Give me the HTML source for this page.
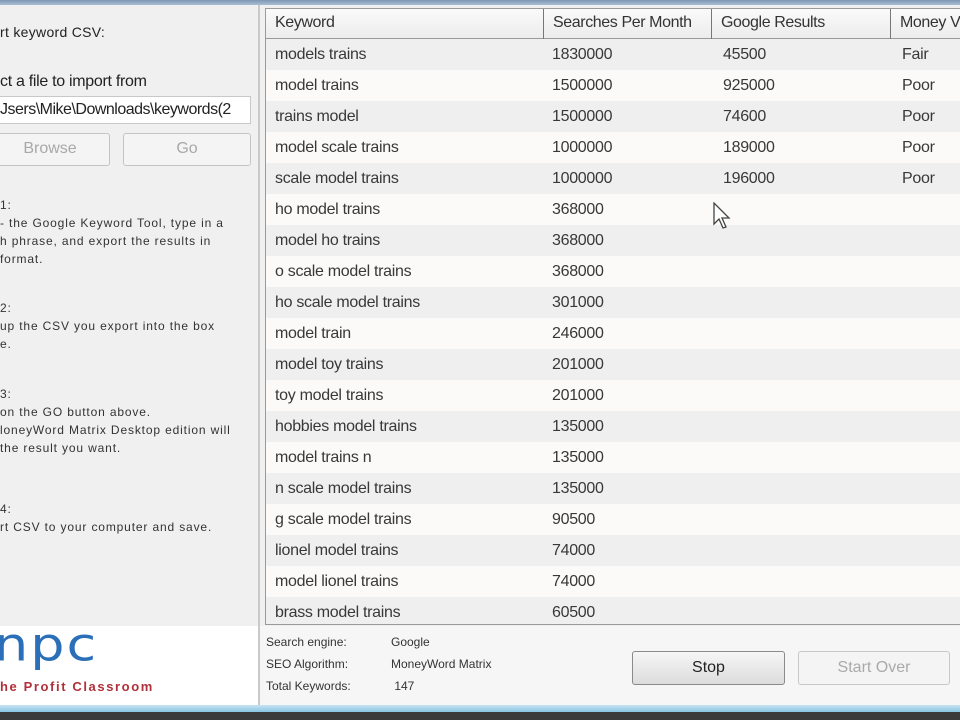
<!DOCTYPE html>
<html><head><meta charset="utf-8"><style>
*{margin:0;padding:0;box-sizing:border-box}
body{width:960px;height:720px;overflow:hidden;background:#f0f0f0;font-family:"Liberation Sans",sans-serif;color:#222;position:relative}
.abs{position:absolute;white-space:nowrap}
.top{left:0;top:0;width:960px;height:5px;background:linear-gradient(#7d97b5,#a9bdd2)}
.left{left:0;top:5px;width:258px;height:621px;background:#f0f0f0}
.logo{left:0;top:626px;width:260px;height:80px;background:#fff}
.vdiv{left:258px;top:5px;width:2px;height:700px;background:#c9c9c9}
.f14{font-size:15px;letter-spacing:-0.3px}
.s{font-size:12px;line-height:18px;letter-spacing:0.85px;color:#333}
.btn{border:1px solid #c4c4c4;border-radius:3px;background:#f4f4f4;color:#a8a8a8;font-size:15px;text-align:center;line-height:30px}
.table{left:265px;top:8px;width:700px;height:617px;border:1px solid #9a9a9a;background:#fff;overflow:hidden}
.hdr{position:absolute;left:0;top:0;height:30px;width:700px;background:linear-gradient(#fafafa,#ececec);border-bottom:1px solid #9a9a9a}
.hdr div{position:absolute;top:0;height:30px;line-height:28px;padding-left:9px;font-size:16px;letter-spacing:-0.4px;border-right:1px solid #777;color:#333}
.row{position:absolute;left:0;width:700px;height:31px;font-size:16px;letter-spacing:-0.3px;color:#383838}
.row span{position:absolute;top:0;line-height:31px}
.even{background:#efefef}.odd{background:#fbfaf8}
.bottom{left:260px;top:626px;width:700px;height:80px;background:#f6f6f6}
.task{left:0;top:705px;width:960px;height:8px;background:linear-gradient(#c8e4f2,#7fc0e0)}
.task2{left:0;top:712px;width:960px;height:8px;background:#3a3a3a}
</style></head><body>
<div class="abs top"></div>
<div class="abs left"></div>
<div class="abs logo"></div>
<div class="abs vdiv"></div>
<div class="abs" style="left:0;top:24px;font-size:14px;letter-spacing:0.3px">rt keyword CSV:</div>
<div class="abs f14" style="left:0;top:73px;font-size:16px">ct a file to import from</div>
<div class="abs" style="left:-2px;top:96px;width:253px;height:28px;background:#fff;border:1px solid #c8c8c8"></div>
<div class="abs f14" style="left:0;top:101px;font-size:16px;letter-spacing:-0.5px">Jsers\Mike\Downloads\keywords(2</div>
<div class="abs btn" style="left:-10px;top:133px;width:120px;height:33px;font-size:16px">Browse</div>
<div class="abs btn" style="left:123px;top:133px;width:128px;height:33px;font-size:16px">Go</div>
<div class="abs s" style="left:0;top:196px">1:<br>- the Google Keyword Tool, type in a<br>h phrase, and export the results in<br>format.</div>
<div class="abs s" style="left:0;top:299px">2:<br>up the CSV you export into the box<br>e.</div>
<div class="abs s" style="left:0;top:385px">3:<br>on the GO button above.<br>loneyWord Matrix Desktop edition will<br>the result you want.</div>
<div class="abs s" style="left:0;top:500px">4:<br>rt CSV to your computer and save.</div>
<div class="abs" style="left:-6px;top:618px;font-size:54px;color:#2a6fb8;letter-spacing:2px;font-family:'DejaVu Sans',sans-serif;transform:scaleY(0.85);transform-origin:top left">npc</div>
<div class="abs" style="left:0;top:679px;font-size:13px;color:#b0303a;letter-spacing:1.6px;font-weight:bold">he Profit Classroom</div>

<div class="abs table">
<div class="hdr">
<div style="left:0;width:278px">Keyword</div>
<div style="left:278px;width:168px">Searches Per Month</div>
<div style="left:446px;width:179px">Google Results</div>
<div style="left:625px;width:100px;border:none">Money V</div>
</div>
<div class="row even" style="top:30px"><span style="left:9px">models trains</span><span style="left:286px">1830000</span><span style="left:457px">45500</span><span style="left:636px">Fair</span></div>
<div class="row odd" style="top:61px"><span style="left:9px">model trains</span><span style="left:286px">1500000</span><span style="left:457px">925000</span><span style="left:636px">Poor</span></div>
<div class="row even" style="top:92px"><span style="left:9px">trains model</span><span style="left:286px">1500000</span><span style="left:457px">74600</span><span style="left:636px">Poor</span></div>
<div class="row odd" style="top:123px"><span style="left:9px">model scale trains</span><span style="left:286px">1000000</span><span style="left:457px">189000</span><span style="left:636px">Poor</span></div>
<div class="row even" style="top:154px"><span style="left:9px">scale model trains</span><span style="left:286px">1000000</span><span style="left:457px">196000</span><span style="left:636px">Poor</span></div>
<div class="row odd" style="top:185px"><span style="left:9px">ho model trains</span><span style="left:286px">368000</span></div>
<div class="row even" style="top:216px"><span style="left:9px">model ho trains</span><span style="left:286px">368000</span></div>
<div class="row odd" style="top:247px"><span style="left:9px">o scale model trains</span><span style="left:286px">368000</span></div>
<div class="row even" style="top:278px"><span style="left:9px">ho scale model trains</span><span style="left:286px">301000</span></div>
<div class="row odd" style="top:309px"><span style="left:9px">model train</span><span style="left:286px">246000</span></div>
<div class="row even" style="top:340px"><span style="left:9px">model toy trains</span><span style="left:286px">201000</span></div>
<div class="row odd" style="top:371px"><span style="left:9px">toy model trains</span><span style="left:286px">201000</span></div>
<div class="row even" style="top:402px"><span style="left:9px">hobbies model trains</span><span style="left:286px">135000</span></div>
<div class="row odd" style="top:433px"><span style="left:9px">model trains n</span><span style="left:286px">135000</span></div>
<div class="row even" style="top:464px"><span style="left:9px">n scale model trains</span><span style="left:286px">135000</span></div>
<div class="row odd" style="top:495px"><span style="left:9px">g scale model trains</span><span style="left:286px">90500</span></div>
<div class="row even" style="top:526px"><span style="left:9px">lionel model trains</span><span style="left:286px">74000</span></div>
<div class="row odd" style="top:557px"><span style="left:9px">model lionel trains</span><span style="left:286px">74000</span></div>
<div class="row even" style="top:588px"><span style="left:9px">brass model trains</span><span style="left:286px">60500</span></div>
</div>
<svg class="abs" style="left:713px;top:202px" width="20" height="30" viewBox="0 0 20 30"><path d="M1 1 L1 22 L6 17 L10 26 L13 25 L9 16 L16 16 Z" fill="#fff" stroke="#444" stroke-width="1.3"/></svg>

<div class="abs bottom"></div>
<div class="abs" style="left:266px;top:631px;font-size:12px;line-height:22px;color:#333">Search engine:<br>SEO Algorithm:<br>Total Keywords:</div>
<div class="abs" style="left:391px;top:631px;font-size:12px;line-height:22px;color:#333">Google<br>MoneyWord Matrix<br>&nbsp;147</div>
<div class="abs" style="left:632px;top:651px;width:153px;height:34px;border:1px solid #8a8a8a;border-radius:3px;background:linear-gradient(#f6f6f6,#dcdcdc);text-align:center;line-height:32px;font-size:16px;color:#222">Stop</div>
<div class="abs" style="left:798px;top:651px;width:152px;height:34px;border:1px solid #c8c8c8;border-radius:3px;background:#f4f4f4;text-align:center;line-height:32px;font-size:16px;color:#aaa">Start Over</div>
<div class="abs task"></div>
<div class="abs task2"></div>
</body></html>
